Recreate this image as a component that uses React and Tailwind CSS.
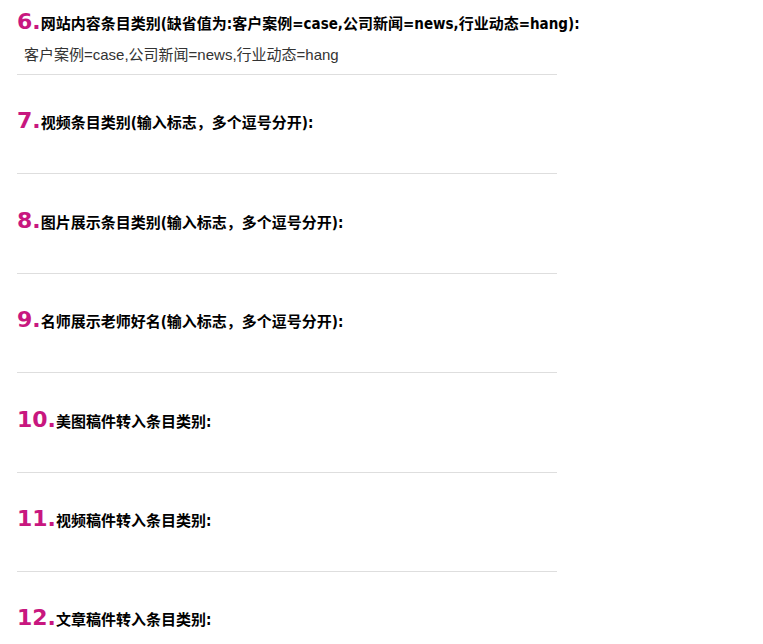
import React from 'react';

const fields = [
  { no: '6.', label: '网站内容条目类别(缺省值为:客户案例=case,公司新闻=news,行业动态=hang):', value: '客户案例=case,公司新闻=news,行业动态=hang' },
  { no: '7.', label: '视频条目类别(输入标志，多个逗号分开):', value: '' },
  { no: '8.', label: '图片展示条目类别(输入标志，多个逗号分开):', value: '' },
  { no: '9.', label: '名师展示老师好名(输入标志，多个逗号分开):', value: '' },
  { no: '10.', label: '美图稿件转入条目类别:', value: '' },
  { no: '11.', label: '视频稿件转入条目类别:', value: '' },
  { no: '12.', label: '文章稿件转入条目类别:', value: '' },
];

export default function App() {
  return (
    <div className="min-h-screen bg-white overflow-hidden">
      <div className="ml-[17px] w-[540px]">
        {fields.map((f, i) => (
          <div
            key={f.no}
            className={`border-b border-[#dedede] ${i === 0 ? 'pt-[9px]' : 'pt-[33.4px]'}`}
          >
            <div className="flex items-baseline h-[26px] whitespace-nowrap">
              <span className="font-['DejaVu_Sans',sans-serif] font-bold text-[22px] leading-[26px] text-[#c8177f]">
                {f.no}
              </span>
              <span className="font-['DejaVu_Sans_Condensed','Noto_Sans_CJK_SC',sans-serif] font-bold text-[15px] text-black">
                {f.label}
              </span>
            </div>
            <div className="mt-[9px] h-[22px] mb-[8px] pl-[7px] font-['Liberation_Sans','Noto_Sans_CJK_SC',sans-serif] text-[15px] leading-[22px] text-[#333]">
              {f.value}
            </div>
          </div>
        ))}
      </div>
    </div>
  );
}
